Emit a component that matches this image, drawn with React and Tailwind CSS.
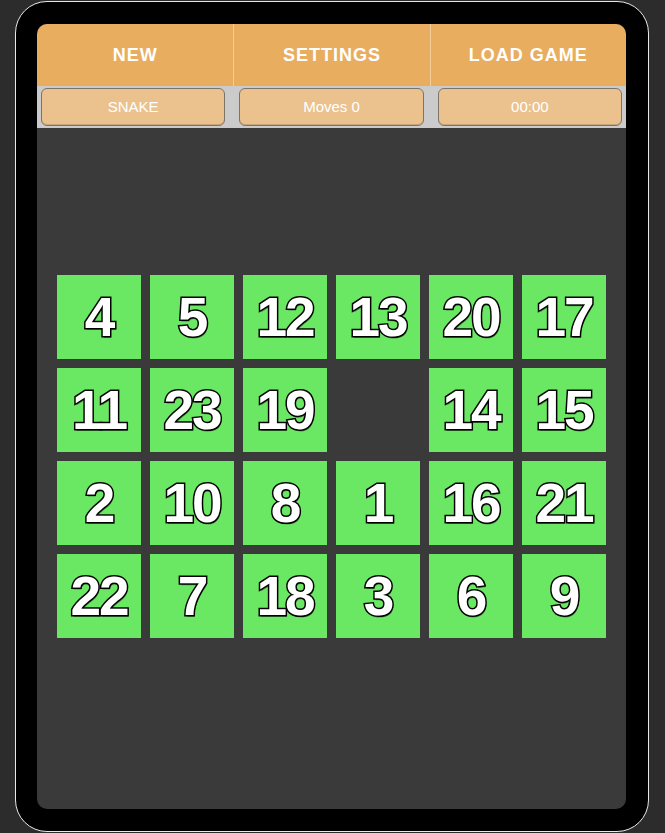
const tiles = [
  4, 5, 12, 13, 20, 17,
  11, 23, 19, null, 14, 15,
  2, 10, 8, 1, 16, 21,
  22, 7, 18, 3, 6, 9,
]

const menu = ['NEW', 'SETTINGS', 'LOAD GAME']
const stats = ['SNAKE', 'Moves 0', '00:00']

export default function App() {
  return (
    <div className="w-[665px] h-[833px] bg-[#2c2c2c] pt-[1px] pl-[15px] font-['Liberation_Sans',Arial,sans-serif]">
      <div className="w-[634px] h-[831px] rounded-[32px] border border-[#e8e8e8] bg-black pt-[22px] pl-[21px]">
        <div className="w-[589px] h-[785px] rounded-[10px] bg-[#3a3a3a] overflow-hidden flex flex-col">
          <div className="h-[62px] grid grid-cols-3 bg-[#e9ad5f]">
            {menu.map((m, i) => (
              <div
                key={m}
                className={`flex items-center justify-center text-white font-bold text-[18px] tracking-[1px] ${i > 0 ? 'border-l border-[#f3cc9c]' : ''}`}
              >
                {m}
              </div>
            ))}
          </div>
          <div className="h-[42px] bg-[#cbcbcb] grid grid-cols-3 gap-[14px] px-[4px] py-[2px]">
            {stats.map((s) => (
              <div
                key={s}
                className="rounded-[6px] border border-[#7d7468] bg-[#ebc28e] shadow-[inset_0_-1px_0_rgba(0,0,0,0.15)] flex items-center justify-center text-white text-[15px]"
              >
                {s}
              </div>
            ))}
          </div>
          <div className="pt-[147px] flex justify-center">
            <div className="grid grid-cols-[repeat(6,84px)] grid-rows-[repeat(4,84px)] gap-[9px]">
              {tiles.map((n, i) =>
                n === null ? (
                  <div key={i} />
                ) : (
                  <div
                    key={i}
                    className="bg-[#6be863] flex items-center justify-center text-white font-bold text-[55px] leading-none tracking-[-2px] [-webkit-text-stroke:3px_#000] [paint-order:stroke_fill] [text-shadow:1px_2px_0_rgba(0,0,0,0.4)]"
                  >
                    {n}
                  </div>
                )
              )}
            </div>
          </div>
        </div>
      </div>
    </div>
  )
}
